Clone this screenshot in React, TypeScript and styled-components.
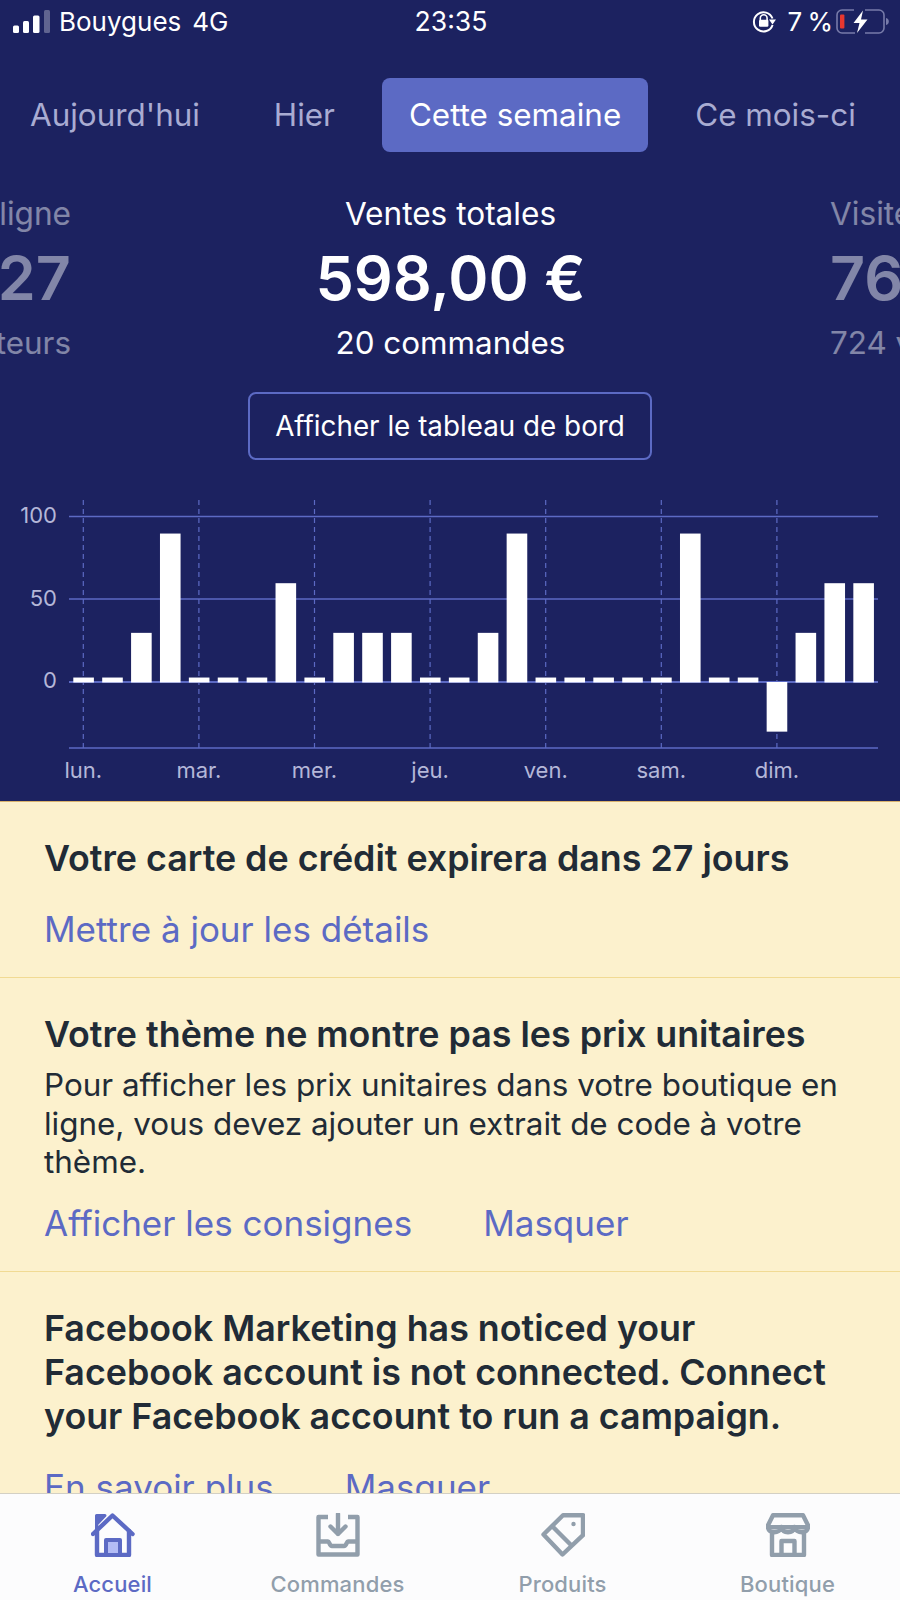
import React from 'react';
import styled, { createGlobalStyle } from 'styled-components';

const GlobalStyle = createGlobalStyle`
    html, body {
        margin:0;
        padding:0;
        background:#1c2260;
    }
    * {
        box-sizing:border-box;
    }
`;
const Page = styled.div`
    width:900px;
    height:1600px;
    display:flex;
    flex-direction:column;
    overflow:hidden;
    font-family:Inter, "Liberation Sans", sans-serif;
`;
const Header = styled.header`
    flex:0 0 801px;
    background:#1c2260;
    color:#fff;
`;
const StatusBar = styled.div`
    height:44px;
    padding:0 11px 2px 13px;
    display:grid;
    grid-template-columns:1fr auto 1fr;
    align-items:center;
    font-size:26px;
`;
const Carrier = styled.div`
    display:flex;
    align-items:center;
    gap:8px;
    span + span {
        margin-left:3px;
    }
`;
const Clock = styled.div`
    font-size:26.6px;
`;
const StatusRight = styled.div`
    display:flex;
    align-items:center;
    justify-content:flex-end;
    gap:3px;
`;
const Percent = styled.span`
    margin:0 0 0 8px;
    word-spacing:-2px;
`;
const Tabs = styled.nav`
    margin-top:34px;
    padding-left:3px;
    display:flex;
    gap:20px;
`;
const Tab = styled.div<{ $active?: boolean }>`
    height:74px;
    padding:0 27px;
    display:flex;
    align-items:center;
    font-size:31.4px;
    border-radius:8px;
    color:${p => p.$active ? '#fff' : '#a9acd2'};
    background:${p => p.$active ? '#5c6ac4' : 'transparent'};
`;
const Stats = styled.div`
    margin-top:42px;
    display:grid;
    grid-template-columns:71px 1fr 70px;
    overflow:hidden;
`;
const Stat = styled.div<{ $side?: 'left' | 'right' }>`
    display:flex;
    flex-direction:column;
    white-space:nowrap;
    min-width:0;
    align-items:${p => p.$side === 'left' ? 'flex-end' : p.$side === 'right' ? 'flex-start' : 'center'};
    opacity:${p => p.$side ? 0.45 : 1};
`;
const StatLabel = styled.div`
    font-size:31.6px;
    line-height:40px;
`;
const StatValue = styled.div`
    margin-top:8px;
    font-size:61px;
    line-height:72px;
    font-weight:600;
`;
const StatSub = styled.div`
    margin-top:9px;
    font-size:31.4px;
    line-height:40px;
`;
const DashboardRow = styled.div`
    margin-top:29px;
    display:flex;
    justify-content:center;
`;
const DashboardButton = styled.div`
    width:404px;
    height:68px;
    display:flex;
    align-items:center;
    justify-content:center;
    font-size:27.8px;
    border:2px solid #5c6ac4;
    border-radius:8px;
`;
const ChartSvg = styled.svg`
    display:block;
    margin-top:30px;
    text {
        font-family:Inter, "Liberation Sans", sans-serif;
        font-size:22px;
        fill:#b4b7d8;
    }
`;
const Feed = styled.main`
    flex:1;
    min-height:0;
    overflow:hidden;
    background:#fcf1cd;
    border-top:1px solid #d9b26c;
`;
const Banner = styled.section`
    padding:34px 44px 26px;
    border-bottom:1px solid #f1da93;
`;
const BannerTitle = styled.h2`
    margin:0;
    font-size:35.8px;
    line-height:44px;
    font-weight:600;
    color:#212b36;
`;
const BannerBody = styled.p`
    margin:10px 0 0;
    font-size:31.4px;
    line-height:38.5px;
    color:#212b36;
`;
const LinkRow = styled.div`
    margin-top:27px;
    display:flex;
    gap:71px;
    font-size:35px;
    line-height:44px;
    color:#5c6ac4;
    ${BannerBody} + & {
        margin-top:19px;
    }
`;
const TabBar = styled.footer`
    flex:0 0 107px;
    display:grid;
    grid-template-columns:repeat(4, 1fr);
    background:#fcfcfd;
    border-top:1px solid #d3d0c4;
`;
const TabItem = styled.div<{ $active?: boolean }>`
    padding-top:19px;
    display:flex;
    flex-direction:column;
    align-items:center;
    color:${p => p.$active ? '#5c6ac4' : '#919eab'};
    font-size:22px;
    font-weight:500;
    letter-spacing:0.15px;
    svg {
        display:block;
    }
`;
const TabLabel = styled.div`
    margin-top:13px;
    line-height:28px;
`;

const tabs = ["Aujourd'hui", 'Hier', 'Cette semaine', 'Ce mois-ci'];
const days = ['lun.', 'mar.', 'mer.', 'jeu.', 'ven.', 'sam.', 'dim.'];
const bars = [3, 3, 30, 90, 3, 3, 3, 60, 3, 30, 30, 30, 3, 3, 30, 90, 3, 3, 3, 3, 3, 90, 3, 3, -30, 30, 60, 60];
const ZERO = 192;
const UNIT = 1.655;

function Chart() {
    return (
        <ChartSvg width={900} height={311} viewBox="0 0 900 311">
            {days.map((d, i) => {
                const x = 83.3 + i * 115.6;
                return (
                    <g key={d}>
                        <line x1={x} x2={x} y1={10} y2={258} stroke="#5c6ac4" strokeWidth={1.2} strokeDasharray="5 4" />
                        <text x={x} y={288} textAnchor="middle">{d}</text>
                    </g>
                );
            })}
            {[26.5, 109, 192, 258].map(y => (
                <line key={y} x1={69} x2={878} y1={y} y2={y} stroke="#5c6ac4" strokeWidth={y === ZERO ? 2 : 1.3} />
            ))}
            <text x={57} y={33} textAnchor="end">100</text>
            <text x={57} y={116} textAnchor="end">50</text>
            <text x={57} y={198} textAnchor="end">0</text>
            {bars.map((v, i) => (
                <rect
                    key={i}
                    x={73.3 + i * 28.89}
                    y={v > 0 ? ZERO + 0.5 - v * UNIT : ZERO}
                    width={20.6}
                    height={Math.abs(v) * UNIT}
                    fill="#fff"
                />
            ))}
        </ChartSvg>
    );
}

const SignalIcon = () => (
    <svg width={38} height={24} viewBox="0 0 38 24" fill="#fff">
        <rect x={0} y={16.5} width={6} height={7.5} rx={1.5} />
        <rect x={10} y={12} width={6} height={12} rx={1.5} />
        <rect x={20} y={6.5} width={6.5} height={17.5} rx={1.5} />
        <rect x={31} y={1} width={6} height={23} rx={1.5} opacity={0.3} />
    </svg>
);
const RotationLockIcon = () => (
    <svg width={24} height={24} viewBox="0 0 24 24" fill="none">
        <path d="M20.5 9.5A9.6 9.6 0 1 0 20.6 16" stroke="#fff" strokeWidth={2} />
        <path d="M17 10.5h7L20.5 15.5z" fill="#fff" />
        <path d="M8.3 11V9.2a3.4 3.4 0 0 1 6.8 0V11" stroke="#fff" strokeWidth={1.6} />
        <rect x={7} y={10.8} width={9.4} height={7} rx={1.2} fill="#fff" />
    </svg>
);
const BatteryIcon = () => (
    <svg width={53} height={25} viewBox="0 0 53 25" fill="none">
        <path d="M18 1H6a5 5 0 0 0-5 5v13a5 5 0 0 0 5 5h13M29 1h14a5 5 0 0 1 5 5v13a5 5 0 0 1-5 5H29" stroke="#777ba9" strokeWidth={1.6} />
        <path d="M50 9c2 .6 2.8 1.8 2.8 3.5S52 15.400 50 16z" fill="#777ba9" />
        <rect x={4} y={5.500} width={4.400} height={14} rx={1} fill="#e8372f" />
        <path d="M27 1.500L17.500 14h6L21 24l10.500-13.500h-6.500z" fill="#fff" />
    </svg>
);

const HomeIcon = () => (
    <svg width={44} height={44} viewBox="0 0 44 44" fill="none" stroke="currentColor" strokeWidth={4.4} strokeLinejoin="round" strokeLinecap="round">
        <path d="M2 21L21.500 2.500L41.500 21" />
        <path d="M5.500 16V2.500h8.500L6 11z" fill="currentColor" strokeWidth={3} />
        <path d="M6 18v24h32V18" />
        <rect x={15} y={27} width={14} height={15} fill="#b3bcf5" strokeWidth={4} />
    </svg>
);
const InboxIcon = () => (
    <svg width={44} height={44} viewBox="0 0 44 44" fill="none" stroke="currentColor" strokeWidth={4.4} strokeLinejoin="round">
        <path d="M12 4H2.500v37.500h39V4H32" />
        <path d="M2.500 28.500h9.500c1.500 0 1.500 4.500 4 4.500h12c2.500 0 2.500-4.500 4-4.500h9.500" />
        <path d="M22 1v20M14.500 13.500L22 21l7.500-7.500" strokeLinecap="round" />
    </svg>
);
const TagIcon = () => (
    <svg width={44} height={44} viewBox="0 0 44 44" fill="none" stroke="currentColor" strokeWidth={4.4} strokeLinejoin="round">
        <path d="M22 2.200h20v20L21.500 41.500L2.500 21.500z" />
        <path d="M10 12L30 32" />
        <circle cx={32.500} cy={11} r={2.200} fill="currentColor" stroke="none" />
    </svg>
);
const StoreIcon = () => (
    <svg width={44} height={44} viewBox="0 0 44 44" fill="none" stroke="currentColor" strokeWidth={4.400} strokeLinejoin="round">
        <path d="M7 2.200h30l5 10v2H2v-2z" />
        <path d="M2 14c0 7 12 7 13.500 0c1.500 7 11.500 7 13 0c1.500 7 13.500 7 13.500 0" />
        <path d="M6 19v23h32V19" />
        <path d="M15.500 42V28h13v14" />
    </svg>
);

const navItems = [
    { label: 'Accueil', Icon: HomeIcon, active: true },
    { label: 'Commandes', Icon: InboxIcon },
    { label: 'Produits', Icon: TagIcon },
    { label: 'Boutique', Icon: StoreIcon },
];

function App() {
    return (
        <Page>
            <GlobalStyle />
            <Header>
                <StatusBar>
                    <Carrier>
                        <SignalIcon />
                        <span>Bouygues</span>
                        <span>4G</span>
                    </Carrier>
                    <Clock>23:35</Clock>
                    <StatusRight>
                        <RotationLockIcon />
                        <Percent>7 %</Percent>
                        <BatteryIcon />
                    </StatusRight>
                </StatusBar>
                <Tabs>
                    {tabs.map(t => <Tab key={t} $active={t === 'Cette semaine'}>{t}</Tab>)}
                </Tabs>
                <Stats>
                    <Stat $side="left">
                        <StatLabel>En ligne</StatLabel>
                        <StatValue>27</StatValue>
                        <StatSub>visiteurs</StatSub>
                    </Stat>
                    <Stat>
                        <StatLabel>Ventes totales</StatLabel>
                        <StatValue>598,00 €</StatValue>
                        <StatSub>20 commandes</StatSub>
                    </Stat>
                    <Stat $side="right">
                        <StatLabel>Visites</StatLabel>
                        <StatValue>76</StatValue>
                        <StatSub>724 visiteurs</StatSub>
                    </Stat>
                </Stats>
                <DashboardRow>
                    <DashboardButton>Afficher le tableau de bord</DashboardButton>
                </DashboardRow>
                <Chart />
            </Header>
            <Feed>
                <Banner>
                    <BannerTitle>Votre carte de crédit expirera dans 27 jours</BannerTitle>
                    <LinkRow><span>Mettre à jour les détails</span></LinkRow>
                </Banner>
                <Banner>
                    <BannerTitle>Votre thème ne montre pas les prix unitaires</BannerTitle>
                    <BannerBody>Pour afficher les prix unitaires dans votre boutique en ligne, vous devez ajouter un extrait de code à votre thème.</BannerBody>
                    <LinkRow><span>Afficher les consignes</span><span>Masquer</span></LinkRow>
                </Banner>
                <Banner>
                    <BannerTitle>Facebook Marketing has noticed your Facebook account is not connected. Connect your Facebook account to run a campaign.</BannerTitle>
                    <LinkRow><span>En savoir plus</span><span>Masquer</span></LinkRow>
                </Banner>
            </Feed>
            <TabBar>
                {navItems.map(({ label, Icon, active }) => (
                    <TabItem key={label} $active={active}>
                        <Icon />
                        <TabLabel>{label}</TabLabel>
                    </TabItem>
                ))}
            </TabBar>
        </Page>
    );
}
export default App;
